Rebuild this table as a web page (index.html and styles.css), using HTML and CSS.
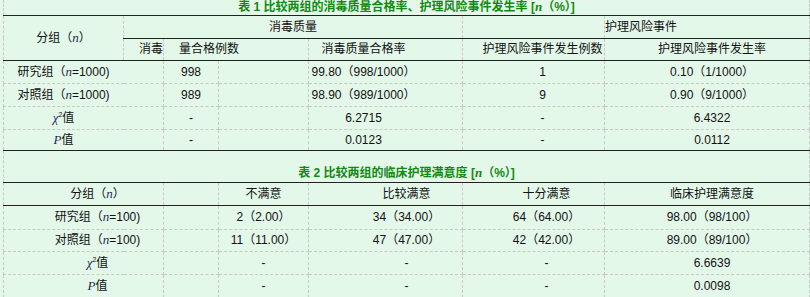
FILE: index.html
```html
<!DOCTYPE html>
<html lang="zh-CN">
<head>
    <meta charset="UTF-8">
    <meta name="viewport" content="width=device-width, initial-scale=1.0">
    <title>比较两组</title>
    <link rel="stylesheet" href="styles.css">
</head>
<body>
    <table class="tb">
        <colgroup>
            <col class="w1"><col class="w2"><col class="w3"><col class="w4"><col class="w5"><col class="w6"><col class="w7">
        </colgroup>
        <!-- 表1 -->
        <tr class="cap1">
            <td colspan="7" class="cap sb">表 1 比较两组的消毒质量合格率、护理风险事件发生率 [<i>n</i>（%）]</td>
        </tr>
        <tr class="h23">
            <td rowspan="2" class="sb">分组（<i>n</i>）</td>
            <td colspan="4" class="sb">消毒质量</td>
            <td class="sb"></td>
            <td class="sb left">护理风险事件</td>
        </tr>
        <tr class="h22">
            <td class="sb clip right">消毒</td>
            <td colspan="2" class="sb left pl15">量合格例数</td>
            <td class="sb pr44">消毒质量合格率</td>
            <td class="sb pl18">护理风险事件发生例数</td>
            <td class="sb pl10">护理风险事件发生率</td>
        </tr>
        <tr class="h23">
            <td colspan="2" class="pr40">研究组（<i>n</i>=1000)</td>
            <td>998</td>
            <td></td>
            <td class="pr44">99.80（998/1000）</td>
            <td class="pl18">1</td>
            <td class="pl10">0.10（1/1000）</td>
        </tr>
        <tr class="h23">
            <td colspan="2" class="pr40">对照组（<i>n</i>=1000)</td>
            <td>989</td>
            <td></td>
            <td class="pr44">98.90（989/1000）</td>
            <td class="pl18">9</td>
            <td class="pl10">0.90（9/1000）</td>
        </tr>
        <tr class="h23">
            <td colspan="2" class="pr40"><i>χ</i><sup>2</sup>值</td>
            <td>-</td>
            <td></td>
            <td class="pr44">6.2715</td>
            <td class="pl18">-</td>
            <td class="pl10">6.4322</td>
        </tr>
        <tr class="h21">
            <td colspan="2" class="sb pr40"><i>P</i>值</td>
            <td class="sb">-</td>
            <td class="sb"></td>
            <td class="sb pr44">0.0123</td>
            <td class="sb pl18">-</td>
            <td class="sb pl10">0.0112</td>
        </tr>
        <!-- 表2 -->
        <tr class="cap2">
            <td colspan="7" class="cap sb">表 2 比较两组的临床护理满意度 [<i>n</i>（%）]</td>
        </tr>
        <tr class="h23">
            <td colspan="2" class="sb pl28">分组（<i>n</i>）</td>
            <td class="sb"></td>
            <td class="sb">不满意</td>
            <td class="sb pl42">比较满意</td>
            <td class="sb pl26">十分满意</td>
            <td class="sb pl10">临床护理满意度</td>
        </tr>
        <tr class="h24">
            <td colspan="2" class="pl28">研究组（<i>n</i>=100)</td>
            <td></td>
            <td>2（2.00）</td>
            <td class="pl42">34（34.00）</td>
            <td class="pl26">64（64.00）</td>
            <td class="pl10">98.00（98/100）</td>
        </tr>
        <tr class="h22">
            <td colspan="2" class="pl28">对照组（<i>n</i>=100)</td>
            <td></td>
            <td>11（11.00）</td>
            <td class="pl42">47（47.00）</td>
            <td class="pl26">42（42.00）</td>
            <td class="pl10">89.00（89/100）</td>
        </tr>
        <tr class="h23">
            <td colspan="2" class="pl28"><i>χ</i><sup>2</sup>值</td>
            <td></td>
            <td>-</td>
            <td class="pl42">-</td>
            <td class="pl26">-</td>
            <td class="pl10">6.6639</td>
        </tr>
        <tr class="h23">
            <td colspan="2" class="pl28"><i>P</i>值</td>
            <td></td>
            <td>-</td>
            <td class="pl42">-</td>
            <td class="pl26">-</td>
            <td class="pl10">0.0098</td>
        </tr>
    </table>
</body>
</html>
```

FILE: styles.css
```css
body{
    margin:0;
    background:#e4f8ea;
    font-family:"Liberation Sans","Noto Sans CJK SC",sans-serif;
    font-size:12px;
    color:#111;
}
.tb{
    margin-left:3px;
    width:806px;
    table-layout:fixed;
    border-collapse:collapse;
}
.w1{width:120px;}
.w2{width:40px;}
.w3{width:55px;}
.w4{width:90px;}
.w5{width:154px;}
.w6{width:142px;}
.w7{width:205px;}

td{
    border:1px dashed #c8c8c8;
    padding:0;
    text-align:center;
    vertical-align:middle;
    white-space:nowrap;
    line-height:14px;
}
.sb{
    border-bottom:1px solid #222;
}
i{
    font-family:"Liberation Serif",serif;
    color:#1c2a5a;
    font-size:13px;
}
sup{
    font-size:7px;
    line-height:0;
}

/* 標題列 */
.cap{
    color:#118a11;
    font-weight:bold;
}
.cap i{
    color:#118a11;
}
.cap1{height:15px;}
.cap1 .cap{
    border-top:none;
    vertical-align:top;
}
.cap2{height:32px;}
.cap2 .cap{
    vertical-align:bottom;
    padding-bottom:2px;
}

.h21{height:21px;}
.h22{height:22px;}
.h23{height:23px;}
.h24{height:24px;}

.left{text-align:left;}
.right{text-align:right;}
.clip{overflow:hidden;}
.pl10{padding-left:10px;}
.pl15{padding-left:15px;}
.pl18{padding-left:18px;}
.pl26{padding-left:26px;}
.pl28{padding-left:28px;}
.pl42{padding-left:42px;}
.pr40{padding-right:40px;}
.pr44{padding-right:44px;}
```
